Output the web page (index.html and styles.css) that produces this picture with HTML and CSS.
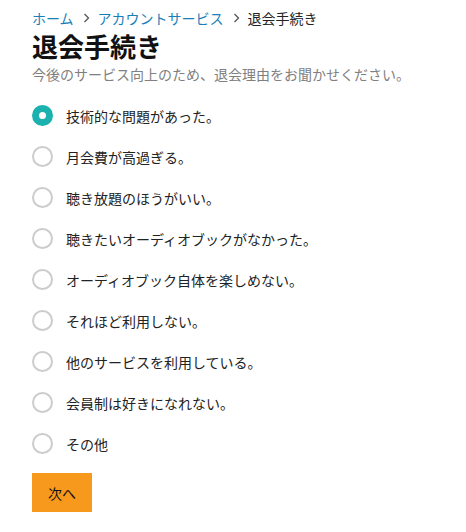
FILE: index.html
```html
<!DOCTYPE html>
<html lang="ja">
<head>
    <meta charset="UTF-8">
    <meta name="viewport" content="width=device-width, initial-scale=1.0">
    <title>退会手続き</title>
    <link rel="stylesheet" href="styles.css">
</head>
<body>
    <div class="page">
        <nav class="breadcrumb">
            <a href="#">ホーム</a>
            <svg class="sep" width="7" height="10" viewBox="0 0 7 10"><polyline points="1.5,1 5.5,5 1.5,9" fill="none" stroke="#555" stroke-width="1.3"/></svg>
            <a href="#">アカウントサービス</a>
            <svg class="sep" width="7" height="10" viewBox="0 0 7 10"><polyline points="1.5,1 5.5,5 1.5,9" fill="none" stroke="#555" stroke-width="1.3"/></svg>
            <span class="current">退会手続き</span>
        </nav>
        <h1>退会手続き</h1>
        <p class="lead">今後のサービス向上のため、退会理由をお聞かせください。</p>

        <form class="reasons">
            <label class="reason"><input type="radio" name="reason" checked><span class="dot"></span>技術的な問題があった。</label>
            <label class="reason"><input type="radio" name="reason"><span class="dot"></span>月会費が高過ぎる。</label>
            <label class="reason"><input type="radio" name="reason"><span class="dot"></span>聴き放題のほうがいい。</label>
            <label class="reason"><input type="radio" name="reason"><span class="dot"></span>聴きたいオーディオブックがなかった。</label>
            <label class="reason"><input type="radio" name="reason"><span class="dot"></span>オーディオブック自体を楽しめない。</label>
            <label class="reason"><input type="radio" name="reason"><span class="dot"></span>それほど利用しない。</label>
            <label class="reason"><input type="radio" name="reason"><span class="dot"></span>他のサービスを利用している。</label>
            <label class="reason"><input type="radio" name="reason"><span class="dot"></span>会員制は好きになれない。</label>
            <label class="reason"><input type="radio" name="reason"><span class="dot"></span>その他</label>

            <button type="button" class="next">次へ</button>
        </form>
    </div>
</body>
</html>
```

FILE: styles.css
```css
body {
    margin: 0;
    font-family: "Noto Sans CJK JP", "Noto Sans", sans-serif;
    color: #222;
    background-color: #fff;
}
.page {
    padding: 8px 32px;
}
.breadcrumb {
    display: flex;
    align-items: center;
    font-size: 14px;
    line-height: 20px;
    color: #222;
}
.breadcrumb a {
    color: #1a7fb8;
    text-decoration: none;
}
.breadcrumb .sep {
    margin: 0 8px 0 9px;
}
h1 {
    font-size: 26px;
    line-height: 30px;
    margin: 3px 0 0;
    font-weight: bold;
    color: #111;
}
.lead {
    font-size: 14px;
    line-height: 20px;
    margin: 3px 0 0;
    color: #808080;
}
.reasons {
    margin-top: 11px;
}
.reason {
    display: flex;
    align-items: center;
    height: 41px;
    font-size: 14px;
    color: #222;
    cursor: pointer;
}
.reason input {
    display: none;
}
.dot {
    box-sizing: border-box;
    width: 21px;
    height: 21px;
    border: 2px solid #ccc;
    border-radius: 50%;
    margin-right: 13px;
    flex-shrink: 0;
}
.reason input:checked + .dot {
    border: 7px solid #1ab1ae;
}
.next {
    margin-top: 9px;
    width: 60px;
    height: 39px;
    border: none;
    background-color: #f7991d;
    color: #111;
    font-family: inherit;
    font-size: 14px;
    cursor: pointer;
}
.next:hover {
    background-color: #e88a10;
}
```
